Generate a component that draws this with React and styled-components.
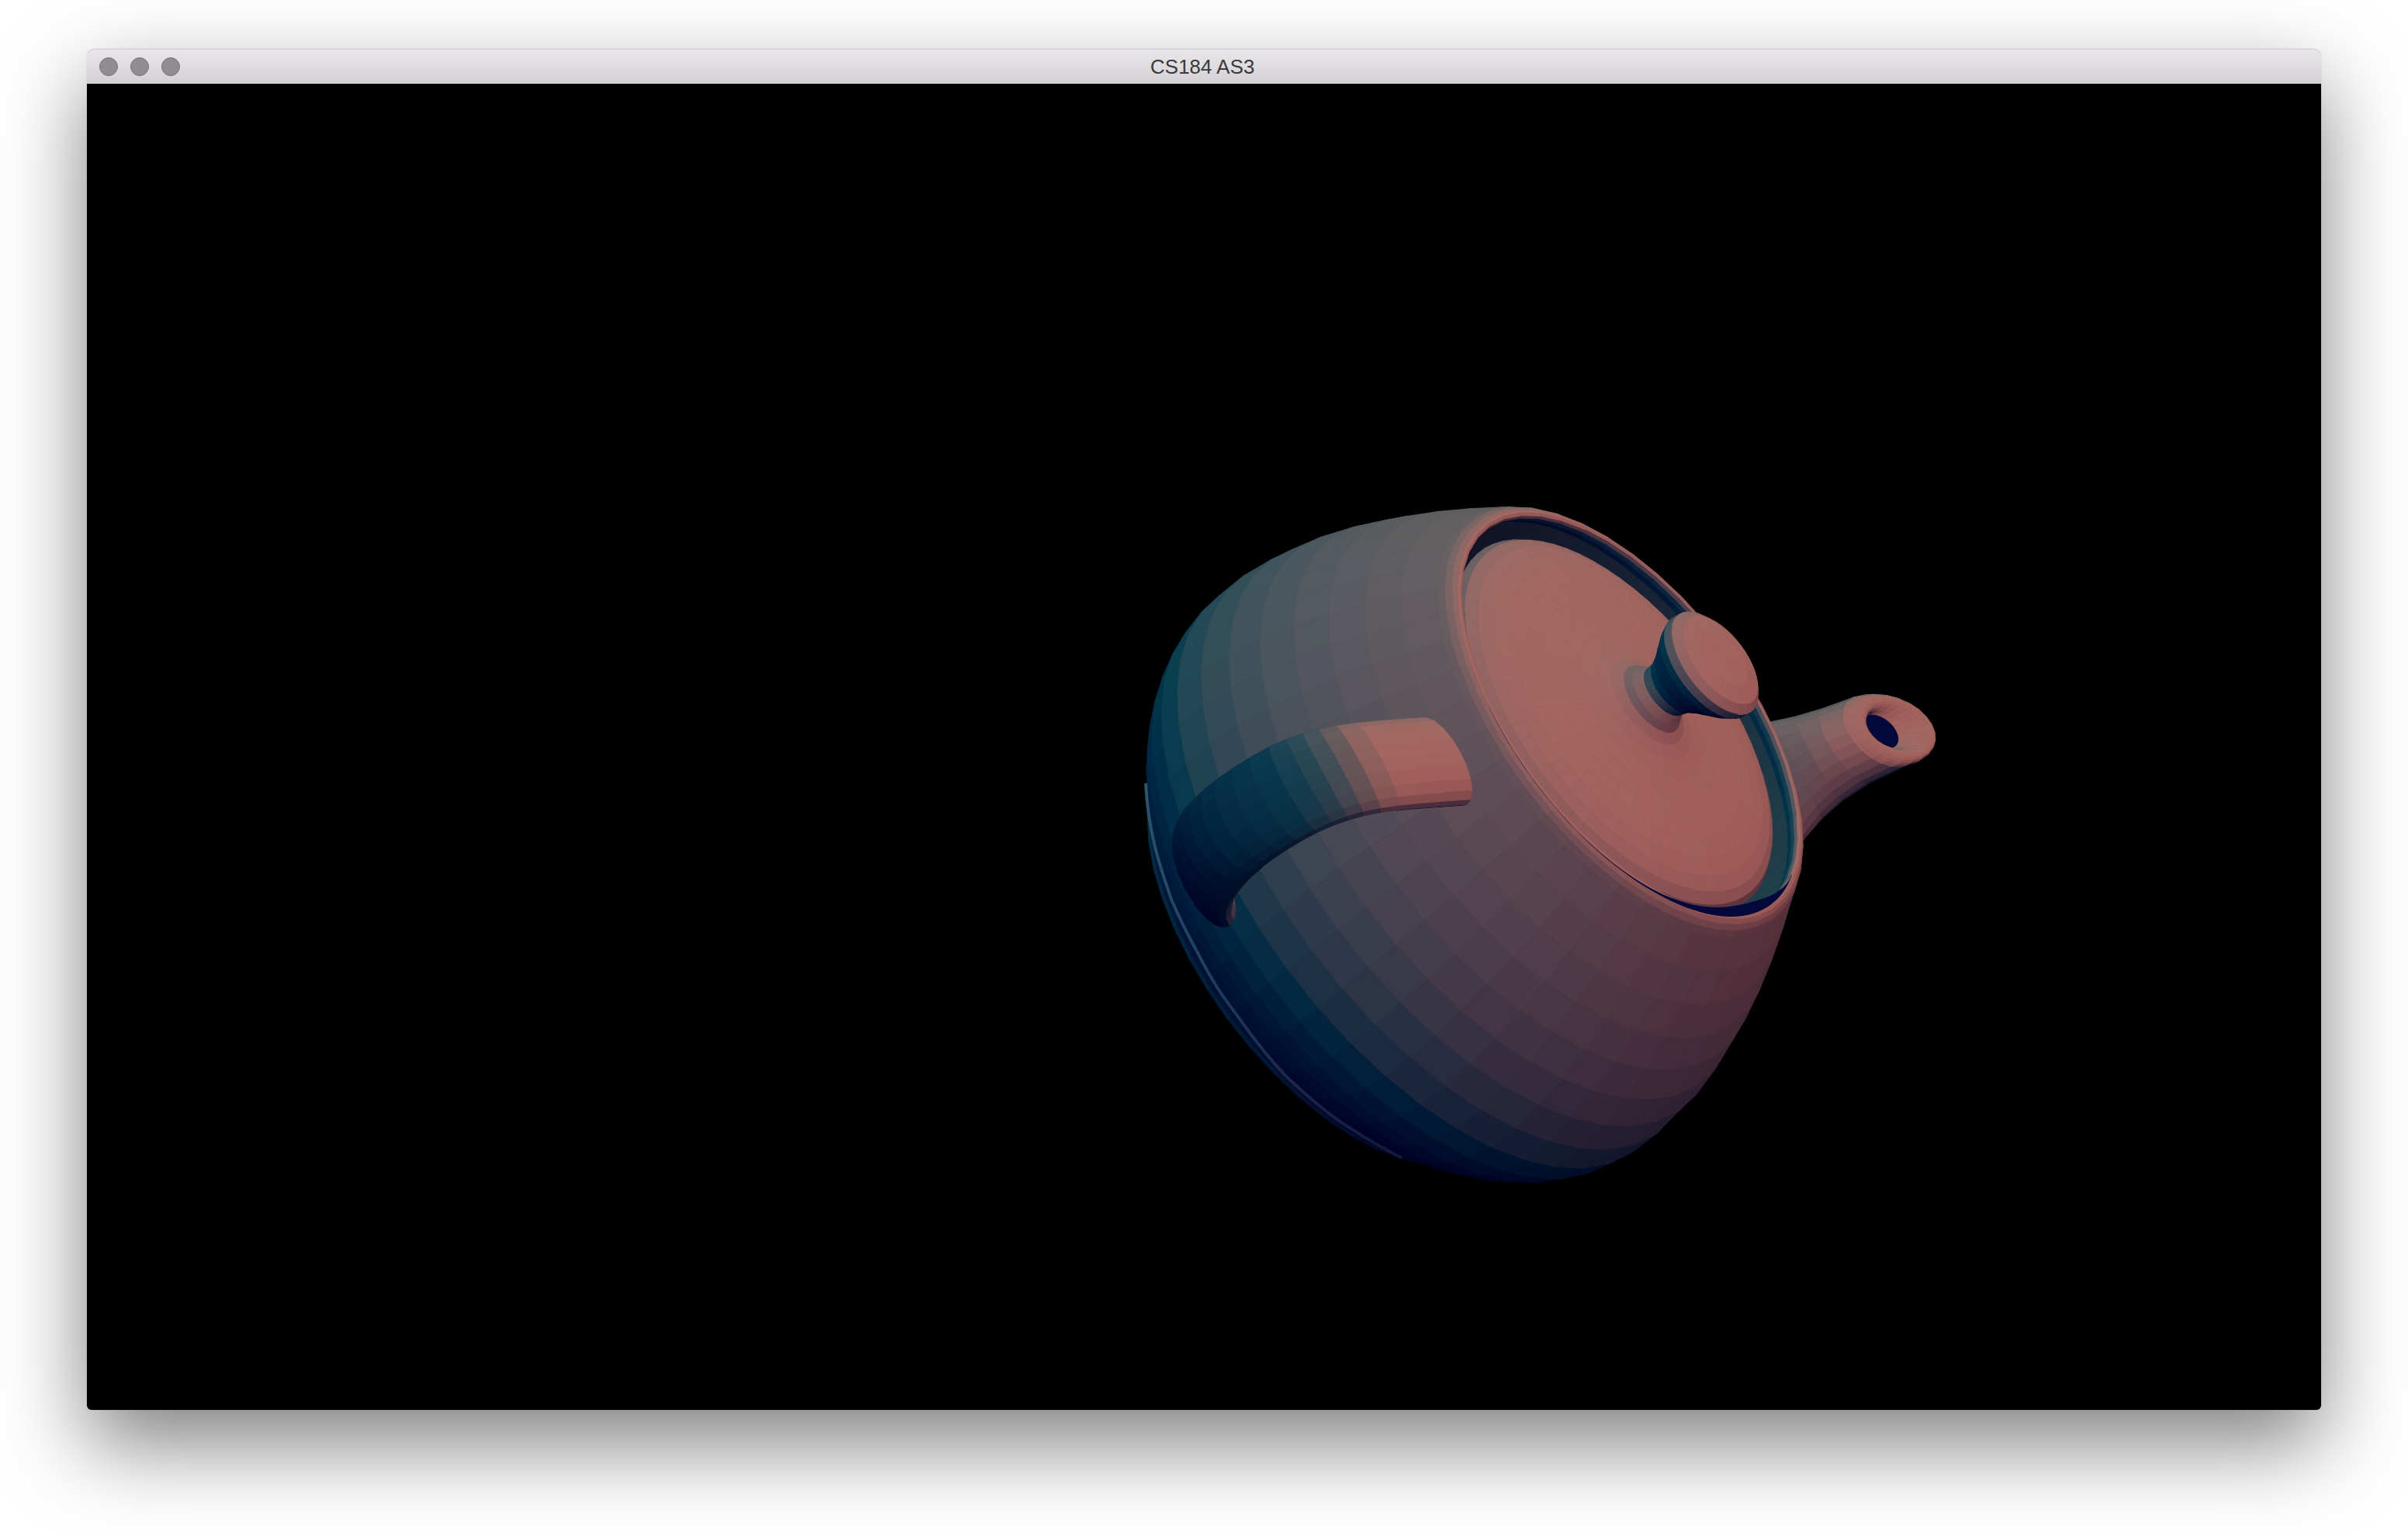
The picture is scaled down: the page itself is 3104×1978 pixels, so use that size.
import React, {useMemo} from "react";
import styled, {createGlobalStyle} from "styled-components";

// teapot profiles as (r, z), Newell's control points nudged to fit this mesh
const BODY = [
  [[1.4, 2.25], [1.3375, 2.38125], [1.4375, 2.38125], [1.5, 2.25]],
  [[1.5, 2.25], [1.8, 1.8], [2.1, 1.25], [2.05, 0.75]],
  [[2.05, 0.75], [2, 0.3], [1.5, 0.075], [1.5, 0]],
];
const INSIDE = [[[1.4, 1.2], [1.4, 1.6], [1.4, 2], [1.4, 2.25]]];
const KNOB = [[[0, 3.02], [0.8, 3.02], [0, 2.72], [0.2, 2.57]]];
const LID = [[[0.2, 2.57], [0.25, 2.38], [1.25, 2.42], [1.3, 2.2]]];
const SPOUT = [
  {a: [[1.7, 1.3], [2.6, 1.3], [2.3, 1.95], [2.7, 2.4]], b: [[1.7, 0.6], [3.1, 0.825], [2.4, 1.2], [3.3, 2.4]], w: [0.66, 0.62, 0.25, 0.25]},
  {a: [[2.7, 2.4], [2.8, 2.475], [2.9, 2.475], [2.85, 2.4]], b: [[3.3, 2.4], [3.525, 2.49375], [3.45, 2.5125], [3.15, 2.4]], w: [0.25, 0.25, 0.15, 0.12]},
];
const HANDLE = [
  {a: [[-1.6, 1.875], [-2.3, 1.875], [-2.7, 1.875], [-2.7, 1.65]], b: [[-1.5, 2.1], [-2.5, 2.1], [-3, 2.1], [-3, 1.65]], w: [0.3, 0.3, 0.3, 0.3]},
  {a: [[-2.7, 1.65], [-2.7, 1.425], [-2.5, 0.975], [-2, 0.75]], b: [[-3, 1.65], [-3, 1.2], [-2.65, 0.7875], [-1.9, 0.45]], w: [0.3, 0.3, 0.3, 0.3]},
];

// projection onto page pixels, fitted by hand to the reference
const ORIGIN = [1740, 1172];
const AXIS_X = [120, -8];
const AXIS_Y = [100, 185];
const AXIS_Z = [154, -107];
const SHEAR = 18;
const RIGHT = [0.564, 0.427, 0.709];
const DOWN = [-0.055, 0.873, -0.491];
const VIEW = [-0.83, 0.24, 0.51];

const dot = (a, b) => a[0] * b[0] + a[1] * b[1] + a[2] * b[2];
const sub = (a, b) => [a[0] - b[0], a[1] - b[1], a[2] - b[2]];
const cross = (a, b) => [a[1] * b[2] - a[2] * b[1], a[2] * b[0] - a[0] * b[2], a[0] * b[1] - a[1] * b[0]];
const norm = (a) => {
  const l = Math.hypot(a[0], a[1], a[2]) || 1;
  return [a[0] / l, a[1] / l, a[2] / l];
};
const bez = (c, t) => {
  const s = 1 - t;
  const k = [s * s * s, 3 * s * s * t, 3 * s * t * t, t * t * t];
  return k[0] * c[0] + k[1] * c[1] + k[2] * c[2] + k[3] * c[3];
};
const bez2 = (c, t) => [bez(c.map((p) => p[0]), t), bez(c.map((p) => p[1]), t)];

// the mesh differs from the stock teapot: longer body, lower spout, leaning knob
const warpBody = ([x, y, z]) => [x, y, z < 2.25 ? 2.25 - (2.25 - z) * 1.22 : z];
const warpSpout = ([x, y, z]) =>
  warpBody([x > 1.7 ? 1.7 + (x - 1.7) * 1.16 : x, y, z > 1.425 ? 1.425 + (z - 1.425) * 0.55 : z]);
const warpHandle = ([x, y, z]) => [x - Math.max(0, 1.875 - z) * 0.45 + 0.08, y, z - 0.1];
const warpKnob = ([x, y, z]) => [x + Math.max(0, z - 2.57) * 0.35, y, z];

// tints per channel: the far bend of the handle cools to blue, the pot's inside is dimmer
const handleTint = ([x]) => {
  const t = Math.max(0.08, Math.min(1, 1 - (-2.25 - x) * 1.3));
  return [t, 0.6 + 0.4 * t, 0.8 + 0.2 * t];
};
const insideTint = () => [0.85, 0.85, 0.85];
const noTint = () => [1, 1, 1];

const project = ([x, y, z]) => {
  const sx = ORIGIN[0] + x * AXIS_X[0] + y * AXIS_Y[0] + z * AXIS_Z[0] + Math.max(0, 2.25 - z) * SHEAR;
  const sy = ORIGIN[1] + x * AXIS_X[1] + y * AXIS_Y[1] + z * AXIS_Z[1];
  return [sx, sy];
};

const clamp = (v) => Math.max(0, Math.min(255, Math.round(v)));

// warm/cool shading, linear in the normal as seen from the camera
const shade = (n, tint) => {
  const sx = dot(n, RIGHT);
  const sy = -dot(n, DOWN);
  const sz = dot(n, VIEW);
  const r = 28 + 90 * sx + 72 * sy + 72 * sz;
  const g = 48 + 20 * sx + 46 * sy + 30 * sz;
  const b = 64 + 6 * sx + 30 * sy + 22 * sz;
  return `rgb(${clamp(r * tint[0])},${clamp(g * tint[1])},${clamp(b * tint[2])})`;
};

const toPoints = (pts) => pts.map((p) => project(p).map((v) => v.toFixed(1)).join(",")).join(" ");

// turn a grid of 3d points into sorted, back-face culled polygons
const facets = (grid, tintAt = noTint) => {
  const out = [];
  for (let i = 0; i < grid.length - 1; i++) {
    for (let j = 0; j < grid[i].length - 1; j++) {
      const q = [grid[i][j], grid[i + 1][j], grid[i + 1][j + 1], grid[i][j + 1]];
      const n = norm(cross(sub(q[2], q[0]), sub(q[3], q[1])));
      if (dot(n, VIEW) <= 0) continue;
      const mid = [0, 1, 2].map((k) => (q[0][k] + q[1][k] + q[2][k] + q[3][k]) / 4);
      out.push({depth: dot(mid, VIEW), fill: shade(n, tintAt(mid)), points: toPoints(q)});
    }
  }
  return out.sort((a, b) => a.depth - b.depth);
};

const revolve = (curves, steps, segs, warp = (p) => p, tintAt) => {
  const grid = [];
  curves.forEach((c, ci) => {
    for (let s = ci === 0 ? 0 : 1; s <= steps; s++) {
      const [r, z] = bez2(c, s / steps);
      const ring = [];
      for (let j = 0; j <= segs; j++) {
        const a = (j / segs) * Math.PI * 2;
        ring.push(warp([r * Math.cos(a), r * Math.sin(a), z]));
      }
      grid.push(ring);
    }
  });
  return facets(grid, tintAt);
};

const tube = (parts, steps, segs, warp, tintAt) => {
  const grid = [];
  parts.forEach((part, pi) => {
    for (let s = pi === 0 ? 0 : 1; s <= steps; s++) {
      const t = s / steps;
      const a = bez2(part.a, t);
      const b = bez2(part.b, t);
      const w = bez(part.w, t);
      const cx = (a[0] + b[0]) / 2;
      const cz = (a[1] + b[1]) / 2;
      const ring = [];
      for (let j = 0; j <= segs; j++) {
        const f = (j / segs) * Math.PI * 2;
        ring.push(warp([cx + (Math.cos(f) * (a[0] - b[0])) / 2, Math.sin(f) * w, cz + (Math.cos(f) * (a[1] - b[1])) / 2]));
      }
      grid.push(ring);
    }
  });
  return {grid, polys: facets(grid, tintAt)};
};

// dark seam where the lid meets the near rim, thin on the handle side, widest by the bottom
const seamPoints = () => {
  const outer = [];
  const inner = [];
  for (let deg = 185; deg >= 55; deg -= 2.5) {
    const a = (deg * Math.PI) / 180;
    const u = (185 - deg) / 130;
    const w = 0.003 + 0.07 * Math.pow(Math.sin(Math.PI * Math.pow(u, 2.6)), 2);
    const at = (r) => [r * Math.cos(a), r * Math.sin(a), 2.33];
    outer.push(at(1.4));
    inner.unshift(at(1.4 - w));
  }
  return toPoints([...outer, ...inner]);
};

const buildTeapot = () => {
  const spout = tube(SPOUT, 10, 24, warpSpout);
  const hole = {fill: "#02093a", points: toPoints(spout.grid[spout.grid.length - 1])};
  const under = [
    hole,
    ...spout.polys,
    ...revolve(INSIDE, 4, 72, warpBody, insideTint),
    ...revolve(LID, 12, 72),
    ...revolve(BODY, 8, 44, warpBody),
  ];
  const over = [...revolve(KNOB, 10, 44, warpKnob), ...tube(HANDLE, 9, 20, warpHandle, handleTint).polys];
  return {under, over, seam: seamPoints()};
};

const GlobalStyle = createGlobalStyle`
  html, body {
    margin: 0;
    background: #fff;
  }
`;

const Page = styled.div`
  width: 3104px;
  height: 1978px;
  padding: 63px 0 0 112px;
  box-sizing: border-box;
  overflow: hidden;
  background: #fff;
`;

const Window = styled.div`
  width: 2880px;
  height: 1755px;
  border-radius: 10px 10px 6px 6px;
  box-shadow: 0 44px 110px rgba(0, 0, 0, 0.5), 0 0 1px rgba(0, 0, 0, 0.4);
`;

const TitleBar = styled.div`
  height: 45px;
  box-sizing: border-box;
  display: grid;
  grid-template-columns: 1fr auto 1fr;
  align-items: center;
  padding: 0 20px 0 16px;
  border-radius: 10px 10px 0 0;
  border-top: 1px solid #d0d0d0;
  background: linear-gradient(#e9e7e9, #d2d0d2);
`;

const Lights = styled.div`
  display: flex;
  gap: 16px;
`;

const Light = styled.span`
  width: 24px;
  height: 24px;
  box-sizing: border-box;
  border-radius: 50%;
  background: #8f8d8f;
  border: 1px solid #767476;
`;

const Title = styled.div`
  font-family: "Liberation Sans", Arial, sans-serif;
  font-size: 26px;
  color: #3a3a3a;
  white-space: nowrap;
`;

const Canvas = styled.div`
  height: 1710px;
  background: #000;
  border-radius: 0 0 6px 6px;
  overflow: hidden;
`;

const Scene = styled.svg`
  display: block;
  width: 2880px;
  height: 1710px;
`;

const Facets = ({items}) =>
  items.map((p, i) => <polygon key={i} points={p.points} fill={p.fill} stroke={p.fill} strokeWidth="0.8" />);

export default function App() {
  const {under, over, seam} = useMemo(buildTeapot, []);
  return (
    <Page>
      <GlobalStyle />
      <Window>
        <TitleBar>
          <Lights>
            <Light />
            <Light />
            <Light />
          </Lights>
          <Title>CS184 AS3</Title>
        </TitleBar>
        <Canvas>
          <Scene viewBox="112 108 2880 1710">
            <defs>
              <linearGradient id="ridge" x1="0" y1="0" x2="0" y2="1">
                <stop offset="0" stopColor="#2a566c" />
                <stop offset="0.5" stopColor="#1f3f60" />
                <stop offset="1" stopColor="#15183a" />
              </linearGradient>
            </defs>
            <Facets items={under} />
            {/* lip along the far edge of the base */}
            <path
              d="M1477 1010 C1480 1080 1500 1130 1510 1160 C1525 1195 1535 1212 1543 1227 C1565 1270 1580 1290 1593 1307 C1620 1345 1640 1370 1660 1390 C1690 1418 1710 1435 1733 1450 C1760 1468 1785 1482 1807 1493"
              fill="none"
              stroke="url(#ridge)"
              strokeWidth="4"
            />
            <polygon points={seam} fill="#02093a" />
            <Facets items={over} />
          </Scene>
        </Canvas>
      </Window>
    </Page>
  );
}
